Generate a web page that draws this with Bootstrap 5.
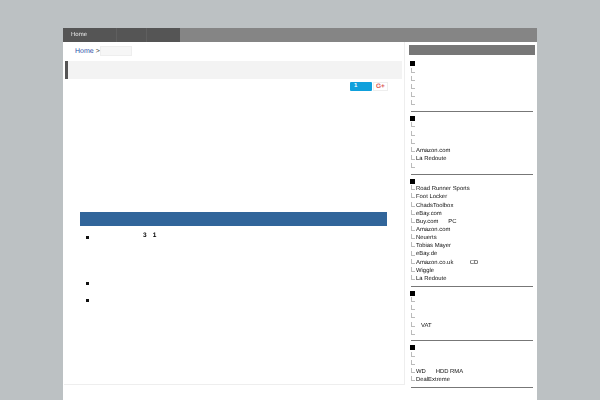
<!DOCTYPE html>
<html lang="en"><head><meta charset="utf-8"><title>Page</title>
<link href="https://cdn.jsdelivr.net/npm/bootstrap@5.3.0/dist/css/bootstrap.min.css" rel="stylesheet">
<style>
html,body{height:400px;overflow:hidden}
body{background:#bcc1c3;font-family:"Liberation Sans",Arial,sans-serif;font-size:5.9px;line-height:8.17px;color:#000;padding-top:28px;text-rendering:geometricPrecision}
.shell{width:474px;margin-left:63px;background:#fff;height:372px}
.topbar{height:14px;background:#858585}
.topbar-left{background:#555;color:#eee;line-height:14px;font-size:6px;filter:grayscale(1)}
.seg{display:block;height:14px;border-right:1px solid #5f5f5f}
.seg-home{width:54px;padding-left:8px}
.seg-two{width:30px}
.seg-three{width:33px;border-right:0}
.main-col{width:341px;height:343px;margin-left:1px;border-right:1px solid #eee;border-bottom:1px solid #eee}
.crumbs{height:19px;padding:4px 0 0 11px;font-size:7px;line-height:10px;color:#333}
.crumbs-text{padding-top:1px}
.crumbs a{color:#2a4fa8;text-decoration:none}
.crumb-box{width:32px;height:10px;background:#f6f6f6;border:1px solid #eee}
.title-strip{height:18px;width:337px;margin-left:1px;background:#f3f3f3;border-left:3px solid #555}
.share-row{padding:3px 0 0 286px;height:133px}
.tw-btn{width:22px;height:9px;background:#0fa0dc;color:#fff;font-size:6px;line-height:9px;padding-left:4px;font-weight:bold;border-radius:1px}
.gp-btn{width:15px;height:9px;margin-left:1px;background:#fff;border:1px solid #eee;color:#d9534f;font-size:6.5px;line-height:7px;text-align:center;font-weight:bold}
.band{width:307px;height:14px;margin-left:16px;background:#31659a}
.bullets{list-style:none;margin:0;padding:0 0 0 22px;filter:grayscale(1)}
.bullets li{font-weight:bold;font-size:6.5px;line-height:8px}
.dot{width:3px;height:3px;background:#111;flex:none}
.line-a{height:52px;padding-top:6px}
.line-b{height:17px}
.num-a{margin-left:54px}
.num-b{margin-left:6px}
.side-col{width:126px;margin-left:4px;padding-top:3px}
.side-head{height:10px;background:#777;margin-bottom:6px}
.side-group{margin:0 2px 0 0}
.sq{width:5px;height:5px;background:#000;margin:4px 0 1.5px 1px}
.tree{list-style:none;margin:0;padding:0 0 0 2px;filter:grayscale(1)}
.tree li{height:8.17px;display:flex;align-items:center;white-space:pre;color:#111}
.tick{width:4px;height:5px;flex:none;border-left:1px solid #bbb;border-bottom:1px solid #bbb;margin:-3px 1px 0 0}
.rule{height:1px;background:#777;margin:2.5px 0 3px 2px}
</style></head>
<body>
<div class="shell">
  <div class="topbar d-flex"><div class="topbar-left d-flex"><span class="seg seg-home">Home</span><span class="seg seg-two"></span><span class="seg seg-three"></span></div></div>
  <div class="d-flex">
    <div class="main-col">
      <div class="crumbs d-flex"><span class="crumbs-text"><a href="#">Home</a> &gt;</span><span class="crumb-box"></span></div>
      <div class="title-strip"></div>
      <div class="share-row d-flex align-items-start">
        <span class="tw-btn">1</span><span class="gp-btn">G+</span>
      </div>
      <div class="band"></div>
      <ul class="bullets">
        <li class="line-a d-flex align-items-start"><span class="dot mt-1"></span><span class="num-a">3</span><span class="num-b">1</span></li>
        <li class="line-b d-flex align-items-start"><span class="dot mt-1"></span></li>
        <li class="line-b d-flex align-items-start"><span class="dot mt-1"></span></li>
      </ul>
    </div>
    <div class="side-col">
      <div class="side-head"></div>
      <div class="side-group"><div class="sq"></div>
        <ul class="tree"><li><i class="tick"></i></li><li><i class="tick"></i></li><li><i class="tick"></i></li><li><i class="tick"></i></li><li><i class="tick"></i></li></ul>
        <div class="rule"></div>
      </div>
      <div class="side-group"><div class="sq"></div>
        <ul class="tree"><li><i class="tick"></i></li><li><i class="tick"></i></li><li><i class="tick"></i></li><li><i class="tick"></i>Amazon.com</li><li><i class="tick"></i>La Redoute</li><li><i class="tick"></i></li></ul>
        <div class="rule"></div>
      </div>
      <div class="side-group"><div class="sq"></div>
        <ul class="tree"><li><i class="tick"></i>Road Runner Sports</li><li><i class="tick"></i>Foot Locker</li><li><i class="tick"></i>ChadsToolbox</li><li><i class="tick"></i>eBay.com</li><li><i class="tick"></i>Buy.com      PC</li><li><i class="tick"></i>Amazon.com</li><li><i class="tick"></i>Neuerts</li><li><i class="tick"></i>Tobias Mayer</li><li><i class="tick"></i>eBay.de</li><li><i class="tick"></i>Amazon.co.uk          CD</li><li><i class="tick"></i>Wiggle</li><li><i class="tick"></i>La Redoute</li></ul>
        <div class="rule"></div>
      </div>
      <div class="side-group"><div class="sq"></div>
        <ul class="tree"><li><i class="tick"></i></li><li><i class="tick"></i></li><li><i class="tick"></i></li><li><i class="tick"></i>   VAT</li><li><i class="tick"></i></li></ul>
        <div class="rule"></div>
      </div>
      <div class="side-group"><div class="sq"></div>
        <ul class="tree"><li><i class="tick"></i></li><li><i class="tick"></i></li><li><i class="tick"></i>WD      HDD RMA</li><li><i class="tick"></i>DealExtreme</li></ul>
        <div class="rule"></div>
      </div>
    </div>
  </div>
</div>
</body></html>
